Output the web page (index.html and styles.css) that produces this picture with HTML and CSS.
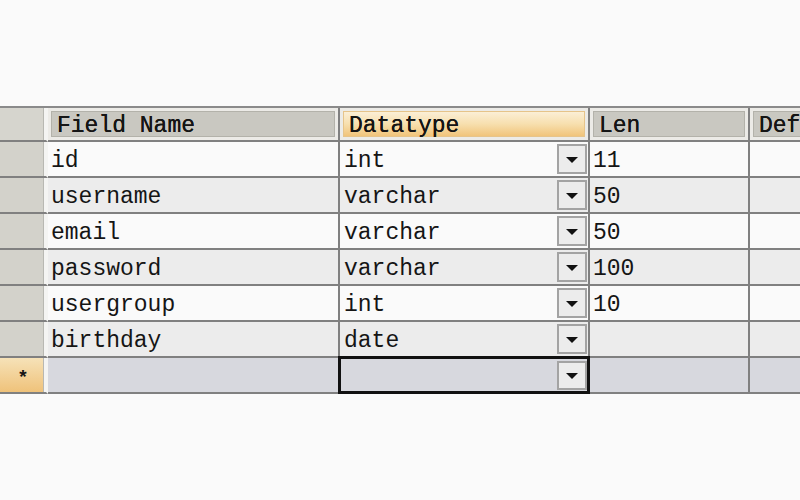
FILE: index.html
```html
<!DOCTYPE html>
<html>
<head>
<meta charset="utf-8">
<link rel="stylesheet" href="styles.css">
</head>
<body>
<div class="grid">
  <div class="rh hdr-rh"></div>
  <div class="hc"><div class="hin">Field Name</div></div>
  <div class="hc"><div class="hin hot">Datatype</div></div>
  <div class="hc"><div class="hin">Len</div></div>
  <div class="hc last"><div class="hin">Def</div></div>

  <div class="rh"></div>
  <div class="c w">id</div>
  <div class="c w dt"><span>int</span><span class="btn"><i></i></span></div>
  <div class="c w">11</div>
  <div class="c w last"></div>

  <div class="rh"></div>
  <div class="c g">username</div>
  <div class="c g dt"><span>varchar</span><span class="btn"><i></i></span></div>
  <div class="c g">50</div>
  <div class="c g last"></div>

  <div class="rh"></div>
  <div class="c w">email</div>
  <div class="c w dt"><span>varchar</span><span class="btn"><i></i></span></div>
  <div class="c w">50</div>
  <div class="c w last"></div>

  <div class="rh"></div>
  <div class="c g">password</div>
  <div class="c g dt"><span>varchar</span><span class="btn"><i></i></span></div>
  <div class="c g">100</div>
  <div class="c g last"></div>

  <div class="rh"></div>
  <div class="c w">usergroup</div>
  <div class="c w dt"><span>int</span><span class="btn"><i></i></span></div>
  <div class="c w">10</div>
  <div class="c w last"></div>

  <div class="rh"></div>
  <div class="c g">birthday</div>
  <div class="c g dt"><span>date</span><span class="btn"><i></i></span></div>
  <div class="c g"></div>
  <div class="c g last"></div>

  <div class="rh new-rh">*</div>
  <div class="c n"></div>
  <div class="c n dt sel"><span></span><span class="btn"><i></i></span></div>
  <div class="c n"></div>
  <div class="c n last"></div>
</div>
</body>
</html>
```
FILE: styles.css
```css
html, body {
  margin: 0;
  padding: 0;
  background: #fafafa;
  width: 800px;
  height: 500px;
  overflow: hidden;
}
body {
  font-family: "Liberation Mono", "Courier New", monospace;
  font-size: 23px;
  color: #151515;
}
.grid {
  margin-top: 106px;
  border-top: 2px solid #8a8a8a;
  display: grid;
  grid-template-columns: 48px 292px 250px 160px 70px;
  grid-template-rows: 34px repeat(7, 36px);
  width: 820px;
}
.grid > div {
  box-sizing: border-box;
  border-right: 2px solid #808080;
  border-bottom: 2px solid #808080;
}
.rh {
  background: #d3d2cb;
  border-right-color: #f4f4f2 !important;
  box-shadow: inset -2px 0 0 #f4f4f2, inset -3px 0 0 #b8b8b2;
}
.hdr-rh {
  background: #d6d5ce;
}
.new-rh {
  background: linear-gradient(#f6e2b8, #efc27a);
  display: flex;
  align-items: center;
  justify-content: center;
  font-size: 19px;
  font-weight: bold;
  padding-top: 6px;
}
.hc {
  background: #ecebe7;
  padding: 3px;
}
.hin {
  height: 100%;
  box-sizing: border-box;
  background: #c9c8c1;
  border: 1px solid #b3b2aa;
  padding-left: 5px;
  line-height: 28px;
  text-shadow: 0 0 0.4px #000;
}
.hin.hot {
  background: linear-gradient(#fbefd6, #f7dfae 50%, #f1c47a);
  border-color: #e6c48a;
}
.c {
  padding-left: 3px;
  padding-top: 2px;
  line-height: 34px;
  white-space: nowrap;
  overflow: hidden;
}
.w { background: #fafafa; }
.g { background: #ececec; }
.n { background: #d7d8de; }
.dt {
  display: flex;
  justify-content: space-between;
  align-items: center;
  padding-top: 0;
  padding-left: 4px;
  padding-right: 1px;
}
.dt span:first-child {
  padding-top: 4px;
}
.btn {
  width: 30px;
  height: 30px;
  box-sizing: border-box;
  border: 2px solid #a3a3a3;
  background: #ececec;
  display: flex;
  align-items: center;
  justify-content: center;
}
.btn i {
  width: 0;
  height: 0;
  border-left: 6px solid transparent;
  border-right: 6px solid transparent;
  border-top: 6px solid #111;
  margin-top: 2px;
}
.sel {
  border: 3px solid #111 !important;
  margin-top: -2px;
  margin-left: -2px;
  padding-right: 0;
}
.sel .btn {
  height: 29px;
}
```
